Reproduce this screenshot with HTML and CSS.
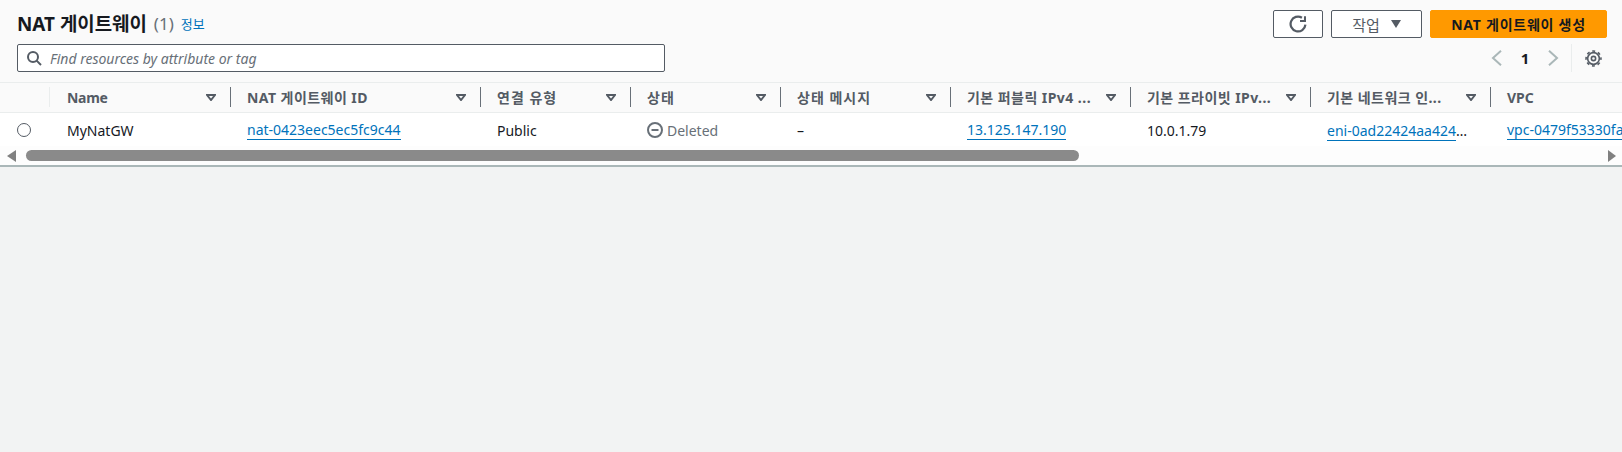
FILE: index.html
```html
<!DOCTYPE html>
<html lang="ko">
<head>
  <meta charset="UTF-8">
  <meta name="viewport" content="width=device-width, initial-scale=1.0">
  <title>NAT 게이트웨이</title>
  <link rel="stylesheet" href="styles.css">
</head>
<body>
  <div class="panel">
    <div class="panel-header">
      <div class="top-row">
        <h1 class="title">NAT 게이트웨이 <span class="count">(1)</span> <a class="info" href="#">정보</a></h1>
        <div class="actions">
          <button class="btn btn-icon" aria-label="새로 고침">
            <svg width="18" height="18" viewBox="0 0 16 16" fill="none" stroke="#545b64" stroke-width="2"><path d="M14.6 8.6A6.6 6.6 0 1 1 11.5 2.4"/><path d="M14.2 1v4.4H9.8" stroke-width="1.8"/></svg>
          </button>
          <button class="btn btn-menu">작업 <span class="caret"></span></button>
          <button class="btn btn-primary">NAT 게이트웨이 생성</button>
        </div>
      </div>
      <div class="filter-row">
        <div class="filter">
          <svg width="16" height="16" viewBox="0 0 16 16" fill="none" stroke="#545b64" stroke-width="2"><circle cx="7" cy="7" r="5"/><path d="M10.6 10.6L15 15"/></svg>
          <span class="placeholder">Find resources by attribute or tag</span>
        </div>
        <div class="pager">
          <svg width="16" height="16" viewBox="0 0 16 16" fill="none" stroke="#aab7b8" stroke-width="2"><path d="M12 .8L4 8l8 7.2"/></svg>
          <span class="page-num">1</span>
          <svg width="16" height="16" viewBox="0 0 16 16" fill="none" stroke="#aab7b8" stroke-width="2"><path d="M4 .8L12 8l-8 7.2"/></svg>
          <span class="pager-line"></span>
          <svg class="gear" width="17" height="17" viewBox="0 0 16 16" fill="none" stroke="#545b64" stroke-width="1.5"><circle cx="8" cy="8" r="2"/><circle cx="8" cy="8" r="5.5"/><circle cx="8" cy="8" r="7" stroke-dasharray="2.75 2.75" stroke-dashoffset="1.37"/></svg>
        </div>
      </div>
    </div>

    <div class="table">
      <div class="head-row">
        <div class="cell-select"></div>
        <div class="th col-name"><span class="th-label label-tight">Name</span><svg class="sort" width="10" height="7" viewBox="0 0 10 7"><path d="M1 1h8L5 6z"/></svg></div>
        <div class="th col-id"><span class="th-label label-mixed">NAT 게이트웨이 ID</span><svg class="sort" width="10" height="7" viewBox="0 0 10 7"><path d="M1 1h8L5 6z"/></svg></div>
        <div class="th col-type"><span class="th-label label-ko">연결 유형</span><svg class="sort" width="10" height="7" viewBox="0 0 10 7"><path d="M1 1h8L5 6z"/></svg></div>
        <div class="th col-state"><span class="th-label label-ko">상태</span><svg class="sort" width="10" height="7" viewBox="0 0 10 7"><path d="M1 1h8L5 6z"/></svg></div>
        <div class="th col-msg"><span class="th-label label-ko">상태 메시지</span><svg class="sort" width="10" height="7" viewBox="0 0 10 7"><path d="M1 1h8L5 6z"/></svg></div>
        <div class="th col-ip"><span class="th-label label-mixed">기본 퍼블릭 IPv4 ...</span><svg class="sort" width="10" height="7" viewBox="0 0 10 7"><path d="M1 1h8L5 6z"/></svg></div>
        <div class="th col-ip"><span class="th-label label-mixed">기본 프라이빗 IPv...</span><svg class="sort" width="10" height="7" viewBox="0 0 10 7"><path d="M1 1h8L5 6z"/></svg></div>
        <div class="th col-ip"><span class="th-label label-mixed">기본 네트워크 인...</span><svg class="sort" width="10" height="7" viewBox="0 0 10 7"><path d="M1 1h8L5 6z"/></svg></div>
        <div class="th col-vpc"><span class="th-label">VPC</span></div>
      </div>
      <div class="body-row">
        <div class="cell-select"><span class="radio"></span></div>
        <div class="td col-name">MyNatGW</div>
        <div class="td col-id"><a href="#">nat-0423eec5ec5fc9c44</a></div>
        <div class="td col-type">Public</div>
        <div class="td col-state">
          <span class="state">
            <svg width="16" height="16" viewBox="0 0 16 16" fill="none" stroke="#687078" stroke-width="2"><circle cx="8" cy="8" r="7"/><path d="M4.5 8h7"/></svg>
            Deleted
          </span>
        </div>
        <div class="td col-msg">–</div>
        <div class="td col-ip"><a href="#">13.125.147.190</a></div>
        <div class="td col-ip">10.0.1.79</div>
        <div class="td col-ip"><span><a href="#">eni-0ad22424aa424</a>…</span></div>
        <div class="td col-vpc"><a href="#">vpc-0479f53330fa</a></div>
      </div>
    </div>

    <div class="scrollbar">
      <span class="arrow-left"></span>
      <span class="thumb"></span>
      <span class="arrow-right"></span>
    </div>
  </div>
</body>
</html>
```

FILE: styles.css
```css
* {
  box-sizing: border-box;
}

html, body {
  height: 100%;
}

body {
  margin: 0;
  background-color: #f2f3f3;
  color: #16191f;
  font-family: "Noto Sans", "Noto Sans CJK KR", sans-serif;
  font-size: 14px;
  overflow: hidden;
}

a {
  color: #0073bb;
  text-decoration: none;
}

.panel {
  background-color: #fafafa;
  border-bottom: 2px solid #aab7b8;
  height: 167px;
  overflow: hidden;
}

.panel-header {
  padding: 10px 15px 0 17px;
  height: 83px;
  border-bottom: 1px solid #eaeded;
}

.top-row {
  display: flex;
  justify-content: space-between;
  height: 28px;
}

.title {
  margin: 0;
  display: flex;
  align-items: center;
  gap: 7px;
  height: 26px;
  font-size: 18.9px;
  font-weight: 700;
}

.count {
  color: #687078;
  font-size: 17px;
  font-weight: 400;
}

.info {
  font-size: 13px;
  font-weight: 400;
}

.actions {
  display: flex;
  gap: 8px;
}

.btn {
  font-family: inherit;
  font-size: 14px;
  border-radius: 2px;
  height: 28px;
  padding: 0;
  border: 1px solid #545b64;
  background-color: #ffffff;
  color: #545b64;
  display: flex;
  align-items: center;
  justify-content: center;
}

.btn-icon {
  width: 50px;
}

.btn-menu {
  width: 91px;
  gap: 11px;
  font-size: 15px;
}

.caret {
  width: 0;
  height: 0;
  border-left: 5.5px solid transparent;
  border-right: 5.5px solid transparent;
  border-top: 8px solid #545b64;
}

.btn-primary {
  width: 177px;
  border-color: #ff9900;
  background-color: #ff9900;
  color: #16191f;
  font-size: 14px;
  font-weight: 700;
  letter-spacing: 0.75px;
}

.filter-row {
  display: flex;
  justify-content: space-between;
  margin-top: 6px;
}

.filter {
  width: 648px;
  height: 28px;
  border: 1px solid #545b64;
  border-radius: 2px;
  background-color: #ffffff;
  display: flex;
  align-items: center;
  gap: 8px;
  padding-left: 8px;
}

.placeholder {
  color: #687078;
  font-size: 14px;
  font-style: italic;
}

.pager {
  display: flex;
  align-items: center;
  height: 28px;
  padding-right: 5px;
}

.page-num {
  font-size: 15px;
  font-weight: 700;
  width: 40px;
  text-align: center;
}

.pager-line {
  width: 1px;
  height: 28px;
  background-color: #eaeded;
  margin: 0 13px 0 10px;
}

.head-row,
.body-row {
  display: flex;
}

.head-row {
  height: 30px;
  padding-top: 4px;
  border-bottom: 1px solid #eaeded;
  background-color: #fafafa;
}

.body-row {
  height: 33px;
  padding-top: 1px;
  background-color: #ffffff;
}

.cell-select {
  width: 50px;
  flex: none;
  display: flex;
  align-items: center;
  justify-content: center;
  height: 100%;
  padding-right: 2px;
}

.head-row .cell-select {
  height: 20px;
  border-right: 1px solid #eaeded;
}

.radio {
  width: 14px;
  height: 14px;
  border: 1px solid #545b64;
  border-radius: 50%;
  background-color: #ffffff;
}

.th,
.td {
  flex: none;
  padding-left: 16px;
  white-space: nowrap;
  overflow: hidden;
}

.th {
  display: flex;
  align-items: center;
  justify-content: space-between;
  height: 20px;
  color: #545b64;
  font-weight: 700;
  border-right: 1px solid #687078;
  padding-right: 14px;
}

.td {
  display: flex;
  align-items: center;
}

.col-name { width: 181px; padding-left: 17px; }
.col-id { width: 250px; }
.col-type { width: 150px; }
.col-state { width: 150px; }
.col-msg { width: 170px; }
.col-ip { width: 180px; }
.col-vpc { width: 131px; border-right: none; }

.label-tight { letter-spacing: -0.3px; }
.label-mixed { letter-spacing: 0.45px; }
.label-ko { letter-spacing: 1px; }

.td a {
  border-bottom: 1px solid #0073bb;
}

.sort {
  flex: none;
  fill: none;
  stroke: #545b64;
  stroke-width: 2;
}

.state {
  display: inline-flex;
  align-items: center;
  gap: 4px;
  color: #687078;
}

.scrollbar {
  height: 19px;
  display: flex;
  align-items: center;
  padding: 0 6px 0 7px;
  background-color: #fdfdfd;
}

.arrow-left {
  width: 0;
  height: 0;
  border-top: 6px solid transparent;
  border-bottom: 6px solid transparent;
  border-right: 9px solid #808080;
}

.thumb {
  width: 1053px;
  height: 11px;
  margin-left: 10px;
  background-color: #8a8a8a;
  border-radius: 6px;
}

.arrow-right {
  margin-left: auto;
  width: 0;
  height: 0;
  border-top: 6px solid transparent;
  border-bottom: 6px solid transparent;
  border-left: 8px solid #808080;
}
```
